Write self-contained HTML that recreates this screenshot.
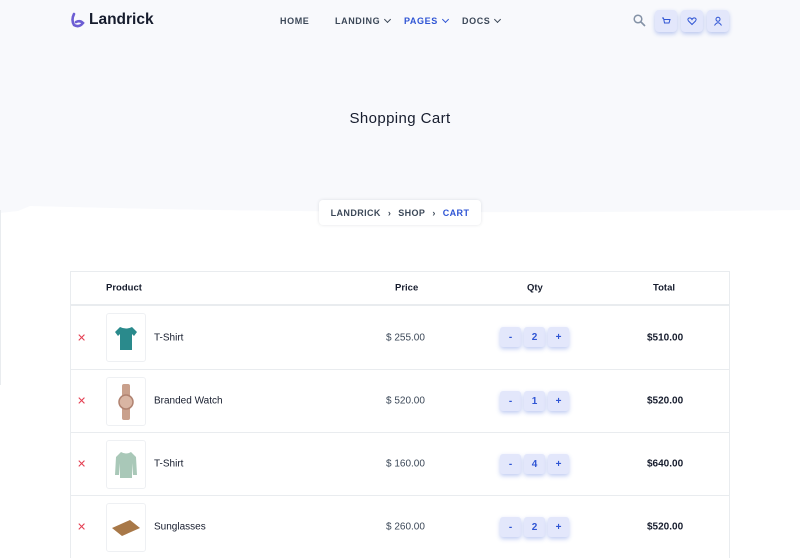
<!DOCTYPE html>
<html><head><meta charset="utf-8"><style>
*{margin:0;padding:0;box-sizing:border-box}
body{width:800px;height:550px;overflow:hidden;background:#fff;font-family:"Liberation Sans",sans-serif;color:#3c4858;position:relative}
.hero{position:absolute;left:0;top:0;width:800px;height:218px;background:#f8f9fc}
.curve{position:absolute;left:0;top:198px}
.nav{position:absolute;top:0;left:0;width:800px;height:42px}
.logo{position:absolute;left:70px;top:11px;font-size:15.5px;font-weight:bold;color:#161c2d;display:flex;align-items:center;gap:3px}
.menu a{position:absolute;top:16px;font-size:9px;font-weight:bold;letter-spacing:.6px;color:#3c4858;text-decoration:none}
.ib{position:absolute;top:10px;width:22px;height:22px;border-radius:4px;background:#e3e7fb;box-shadow:0 2px 4px rgba(47,85,212,.3);display:flex;align-items:center;justify-content:center}
h1{position:absolute;top:110px;width:800px;text-align:center;font-size:15px;font-weight:normal;color:#161c2d;letter-spacing:.4px}
.bc{position:absolute;left:319px;top:200px;width:162px;height:25px;background:#fff;border-radius:4px;box-shadow:0 0 3px rgba(60,72,88,.15);font-size:9px;font-weight:bold;letter-spacing:.4px;display:flex;align-items:center;justify-content:center;gap:7px;color:#3c4858}
.tbl{position:absolute;left:70px;top:271px;width:660px;border:1px solid #e9ecef;border-bottom:none}
.row{position:relative;height:63px;border-top:1px solid #e9ecef}
.hd{height:34px;border-bottom:2px solid #e9ecef;font-size:9.5px;font-weight:bold;color:#161c2d}
.hd+.row{border-top:none}
.hd span,.row span{position:absolute;top:50%;transform:translateY(-50%)}
.x{left:6px;color:#e43f52;font-size:11px}
.img{position:absolute;left:35px;top:7px;width:40px;height:49px;border:1px solid #eef0f3;border-radius:3px;display:flex;align-items:center;justify-content:center}
.nm{left:83px;font-size:10px;color:#161c2d}
.pr{left:315px;font-size:10px}
.q{position:absolute;top:21px;width:21px;height:20px;border-radius:3px;background:#e3e7fb;box-shadow:0 2px 4px rgba(47,85,212,.3);color:#2f55d4;font-size:10px;font-weight:bold;display:flex;align-items:center;justify-content:center}
.tt{left:576px;font-size:10px;font-weight:bold;color:#161c2d}
.chev{display:inline-block;width:5px;height:5px;border-right:1.3px solid currentColor;border-bottom:1.3px solid currentColor;transform:rotate(45deg);margin-left:5px;position:relative;top:-2px}
</style></head><body>
<div class="hero"></div>
<svg class="curve" width="800" height="25"><path d="M0 15 L18 13 L30 8 Q400 18 800 12 L800 25 L0 25Z" fill="#fff"/></svg>
<div style="position:absolute;left:0;top:210px;width:1px;height:175px;background:#e9ecef"></div>
<div class="nav">
<div class="logo"><svg width="16" height="16" viewBox="0 0 16 16"><path d="M4 2 Q1 8 4 13 Q9 16 13 11 Q10 8 6 10" fill="none" stroke="#6c5dd3" stroke-width="2.6" stroke-linecap="round"/></svg>Landrick</div>
<div class="menu"><a style="left:280px">HOME</a><a style="left:335px">LANDING<i class="chev"></i></a><a style="left:404px;color:#2f55d4">PAGES<i class="chev"></i></a><a style="left:462px">DOCS<i class="chev"></i></a></div>
<svg style="position:absolute;left:633px;top:14px" width="13" height="13" viewBox="0 0 13 13"><circle cx="5" cy="5" r="3.8" fill="none" stroke="#8492a6" stroke-width="1.5"/><path d="M8 8 L12 12" stroke="#8492a6" stroke-width="1.6"/></svg>
<div class="ib" style="left:655px"><svg width="10" height="10" viewBox="0 0 10 10"><path d="M1 2h1.5l1 5h4.5l1-3.5H3" fill="none" stroke="#2f55d4" stroke-width="1"/></svg></div>
<div class="ib" style="left:681px"><svg width="10" height="10" viewBox="0 0 10 10"><path d="M5 8.5 L1.5 5 Q0 3 2 2 Q4 1.5 5 3.5 Q6 1.5 8 2 Q10 3 8.5 5Z" fill="none" stroke="#2f55d4" stroke-width="1"/></svg></div>
<div class="ib" style="left:707px"><svg width="10" height="10" viewBox="0 0 10 10"><circle cx="5" cy="3.3" r="2" fill="none" stroke="#2f55d4" stroke-width="1"/><path d="M1.5 9.5 Q5 4 8.5 9.5" fill="none" stroke="#2f55d4" stroke-width="1"/></svg></div>
</div>
<h1>Shopping Cart</h1>
<div class="bc"><span>LANDRICK</span><span>›</span><span>SHOP</span><span>›</span><span style="color:#2f55d4">CART</span></div>
<div class="tbl">
<div class="row hd" style="border-top:none"><span style="left:35px">Product</span><span style="left:324px">Price</span><span style="left:456px">Qty</span><span style="left:582px">Total</span></div>
<div class="row"><span class="x">✕</span><div class="img"><svg width="30" height="30" viewBox="0 0 30 30"><path d="M9 4 L4 9 L7 13 L9 11 L9 27 L21 27 L21 11 L23 13 L26 9 L21 4 Q15 7 9 4Z" fill="#2a8a8c"/></svg></div><span class="nm">T-Shirt</span><span class="pr">$ 255.00</span><div class="q" style="left:429px">-</div><div class="q" style="left:453px">2</div><div class="q" style="left:477px">+</div><span class="tt">$510.00</span></div>
<div class="row"><span class="x">✕</span><div class="img"><svg width="20" height="36" viewBox="0 0 20 36"><rect x="6" y="0" width="8" height="36" rx="2" fill="#c9a08c"/><circle cx="10" cy="18" r="7" fill="#d9b5a3" stroke="#b08270" stroke-width="1.5"/></svg></div><span class="nm">Branded Watch</span><span class="pr">$ 520.00</span><div class="q" style="left:429px">-</div><div class="q" style="left:453px">1</div><div class="q" style="left:477px">+</div><span class="tt">$520.00</span></div>
<div class="row"><span class="x">✕</span><div class="img"><svg width="30" height="32" viewBox="0 0 30 32"><path d="M10 3 L5 8 L4 26 L8 26 L9 14 L9 29 L21 29 L21 14 L22 26 L26 26 L25 8 L20 3 Q15 6 10 3Z" fill="#a9c8b8"/></svg></div><span class="nm">T-Shirt</span><span class="pr">$ 160.00</span><div class="q" style="left:429px">-</div><div class="q" style="left:453px">4</div><div class="q" style="left:477px">+</div><span class="tt">$640.00</span></div>
<div class="row"><span class="x">✕</span><div class="img"><svg width="32" height="24" viewBox="0 0 32 24"><path d="M2 12 L20 4 L30 12 L12 20Z" fill="#a87848"/></svg></div><span class="nm">Sunglasses</span><span class="pr">$ 260.00</span><div class="q" style="left:429px">-</div><div class="q" style="left:453px">2</div><div class="q" style="left:477px">+</div><span class="tt">$520.00</span></div>
</div>
</body></html>
